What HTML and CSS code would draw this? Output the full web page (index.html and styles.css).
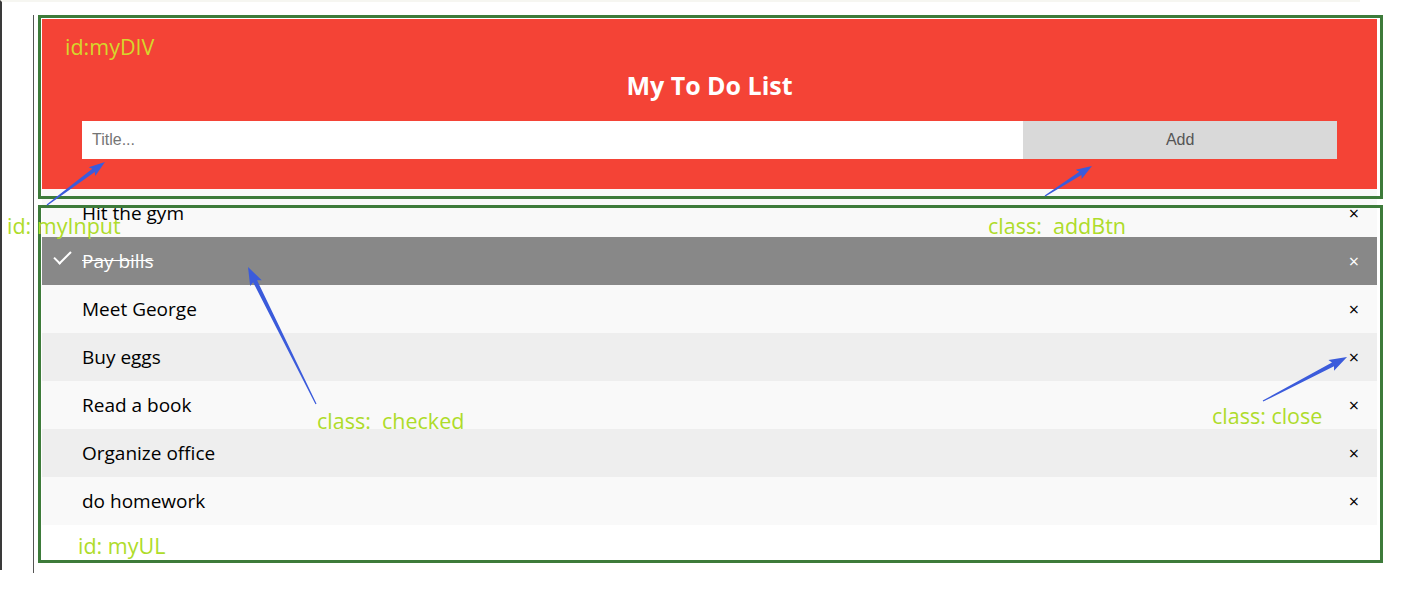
FILE: index.html
```html
<!DOCTYPE html>
<html>
<head>
<meta charset="utf-8">
<link rel="stylesheet" href="styles.css">
</head>
<body>
<div class="frame">
  <div class="panel">
    <div class="app">
      <div id="myDIV" class="header">
        <h2 class="title">My To Do List</h2>
        <div class="form">
          <input type="text" id="myInput" class="input" placeholder="Title...">
          <span class="addBtn">Add</span>
        </div>
      </div>
      <ul id="myUL" class="list">
        <li class="item"><span class="txt">Hit the gym</span><span class="close">×</span></li>
        <li class="item checked"><span class="txt">Pay bills</span><span class="close">×</span></li>
        <li class="item"><span class="txt">Meet George</span><span class="close">×</span></li>
        <li class="item"><span class="txt">Buy eggs</span><span class="close">×</span></li>
        <li class="item"><span class="txt">Read a book</span><span class="close">×</span></li>
        <li class="item"><span class="txt">Organize office</span><span class="close">×</span></li>
        <li class="item"><span class="txt">do homework</span><span class="close">×</span></li>
      </ul>
    </div>
  </div>
</div>

<div class="notes">
  <div class="box box-div"></div>
  <div class="box box-ul"></div>
  <span class="label l-div">id:myDIV</span>
  <span class="label l-input">id: myInput</span>
  <span class="label l-add">class:  addBtn</span>
  <span class="label l-checked">class:  checked</span>
  <span class="label l-close">class: close</span>
  <span class="label l-ul">id: myUL</span>
  <svg class="arrows" width="1405" height="593" viewBox="0 0 1405 593">
    <g fill="#3b5bdb">
      <polygon transform="translate(47,205) rotate(-36.6)" points="0,-0.6 58,-2 56,-5.5 72.2,0 56,5.5 58,2 0,0.6"/>
      <polygon transform="translate(1045,196) rotate(-32.6)" points="0,-0.6 42,-2 40,-5.5 55.8,0 40,5.5 42,2 0,0.6"/>
      <polygon transform="translate(316,404) rotate(-116.4)" points="0,-0.6 137,-2.2 135,-6.5 152.9,0 135,6.5 137,2.2 0,0.6"/>
      <polygon transform="translate(1263,401) rotate(-27.6)" points="0,-0.6 79,-2.2 77,-6 94.8,0 77,6 79,2.2 0,0.6"/>
    </g>
  </svg>
</div>
</body>
</html>
```
FILE: styles.css
```css
* { box-sizing: border-box; }

html, body {
  margin: 0;
  padding: 0;
  background: #ffffff;
}

body {
  position: relative;
  width: 1405px;
  height: 593px;
  overflow: hidden;
  font-family: "Open Sans", "Noto Sans CJK SC", sans-serif;
}

.frame {
  border-left: 2px solid #3a3a3a;
  border-top: 2px solid #f6f6f1;
  height: 570px;
  width: 1360px;
}

.panel {
  margin-left: 31px;
  margin-top: 13px;
  height: 558px;
  border-left: 1px solid #555555;
  padding-left: 8px;
  padding-top: 4px;
}

.app {
  width: 1335px;
}

.header {
  background: #f44336;
  padding: 30px 40px;
  color: #ffffff;
  text-align: center;
}

.title {
  margin: 20px 0;
  font-size: 25px;
  line-height: 32px;
  font-weight: 700;
}

.form {
  display: flex;
}

.input {
  width: 75%;
  height: 38px;
  border: none;
  border-radius: 0;
  margin: 0;
  padding: 10px;
  font-family: "Liberation Sans", Arial, sans-serif;
  font-size: 16px;
  color: #333;
  background: #fff;
  outline: none;
}

.input::placeholder {
  color: #757575;
}

.addBtn {
  width: 25%;
  height: 38px;
  padding: 10px;
  background: #d9d9d9;
  color: #555555;
  font-family: "Liberation Sans", Arial, sans-serif;
  font-size: 16px;
  line-height: 18px;
  text-align: center;
}

.list {
  margin: 0;
  padding: 0;
  list-style: none;
}

.item {
  position: relative;
  display: flex;
  justify-content: space-between;
  align-items: center;
  height: 48px;
  padding: 12px 18px 12px 40px;
  background: #eeeeee;
  font-size: 19px;
  line-height: 24px;
  color: #000;
}

.item:nth-child(odd) {
  background: #f9f9f9;
}

.item.checked {
  background: #888888;
  color: #ffffff;
}

.item.checked .txt {
  text-decoration: line-through;
}

.item.checked::before {
  content: "";
  position: absolute;
  border-color: #fff;
  border-style: solid;
  border-width: 0 2px 2px 0;
  top: 10px;
  left: 16px;
  transform: rotate(45deg);
  height: 15px;
  width: 7px;
}

.close {
  font-size: 18px;
  line-height: 24px;
}

/* annotations */
.notes {
  position: absolute;
  left: 0;
  top: 0;
  width: 1405px;
  height: 593px;
  pointer-events: none;
}

.box {
  position: absolute;
  border: 3px solid #3d7b3a;
}

.box-div {
  left: 38px;
  top: 15px;
  width: 1345px;
  height: 184px;
}

.box-ul {
  left: 38px;
  top: 205px;
  width: 1345px;
  height: 358px;
}

.label {
  position: absolute;
  white-space: pre;
  font-family: "Open Sans", "Noto Sans CJK SC", sans-serif;
  font-size: 21.5px;
  line-height: 24px;
  color: #aedc2a;
}

.l-div { left: 65px; top: 35px; color: #d6d62c; }
.l-input { left: 7px; top: 214px; }
.l-add { left: 988px; top: 214px; }
.l-checked { left: 317px; top: 409px; }
.l-close { left: 1212px; top: 404px; }
.l-ul { left: 78px; top: 534px; }

.arrows {
  position: absolute;
  left: 0;
  top: 0;
}
```
